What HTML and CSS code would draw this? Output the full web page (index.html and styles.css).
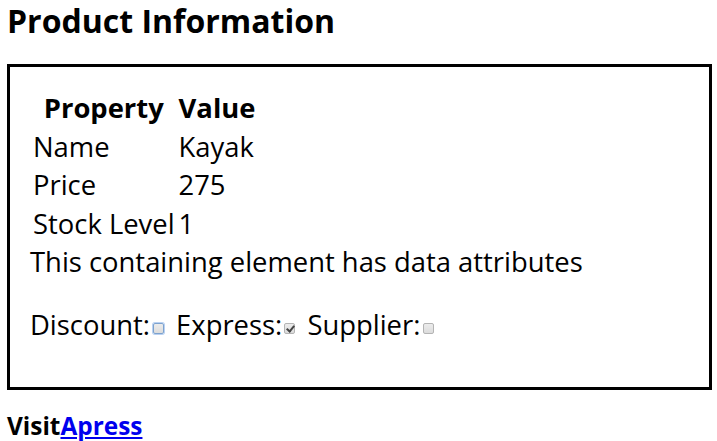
FILE: index.html
```html
<!DOCTYPE html>
<html lang="en">
<head>
  <meta charset="UTF-8">
  <title>Product Information</title>
  <link rel="stylesheet" href="styles.css">
</head>
<body>
  <h1>Product Information</h1>

  <div class="product" data-discount="false" data-express="true" data-supplier="false">
    <table>
      <tr><th>Property</th><th>Value</th></tr>
      <tr><td>Name</td><td>Kayak</td></tr>
      <tr><td>Price</td><td>275</td></tr>
      <tr><td>Stock Level</td><td>1</td></tr>
    </table>
    <div class="note">This containing element has data attributes</div>
    <p class="flags">
      Discount:<input type="checkbox" class="focused">
      Express:<input type="checkbox" checked>
      Supplier:<input type="checkbox">
    </p>
  </div>

  <p class="visit">Visit<a href="#">Apress</a></p>
</body>
</html>
```

FILE: styles.css
```css
body {
  margin: 0;
  padding: 0 5px 0 7px;
  font-family: "Open Sans", "Noto Sans", sans-serif;
  color: #000;
  background: #fff;
}

h1 {
  margin: 0 0 23px;
  font-size: 32px;
  line-height: 41px;
  font-weight: bold;
}

.product {
  border: 3px solid #000;
  padding: 21px 20px 20px;
  font-size: 27.4px;
  line-height: 34.5px;
}

table {
  border-spacing: 2px;
  font-size: 27.4px;
}

th,
td {
  padding: 1px;
  line-height: 34.5px;
}

td {
  text-align: left;
}

.note {
  margin-top: 1px;
}

.flags {
  margin: 28px 0 25px;
}

.flags input {
  appearance: none;
  -webkit-appearance: none;
  position: relative;
  width: 11px;
  height: 11px;
  margin: 0 5px 1px 3px;
  border: 1px solid #b4b4b4;
  border-radius: 2px;
  background: linear-gradient(#ececec, #dcdcdc);
  vertical-align: baseline;
}

.flags input.focused {
  border-color: #7da2ce;
  box-shadow: 0 0 0 1px #b9d1f2;
}

.flags input:checked {
  margin-left: 2px;
}

.flags input:checked::after {
  content: "";
  position: absolute;
  left: 3px;
  top: 0;
  width: 3px;
  height: 6px;
  border: solid #444;
  border-width: 0 2px 2px 0;
  transform: rotate(40deg);
}

.visit {
  margin: 21px 0 0;
  font-size: 24.4px;
  line-height: 30px;
  font-weight: bold;
}

.visit a {
  color: #0000ee;
  text-decoration: underline;
}
```
